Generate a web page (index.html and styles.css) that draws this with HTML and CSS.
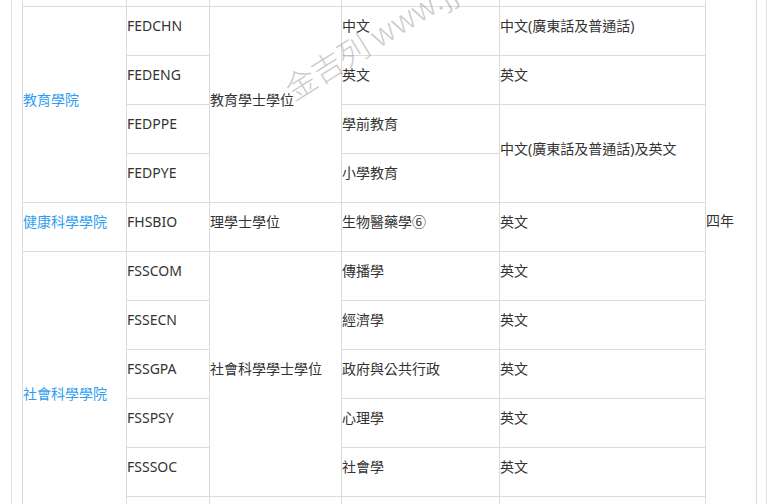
FILE: index.html
```html
<!DOCTYPE html>
<html lang="zh-Hant">
<head>
<meta charset="utf-8">
<title>課程表</title>
<link rel="stylesheet" href="styles.css">
</head>
<body>
<div class="frame">
  <table class="programmes">
    <colgroup>
      <col class="c-fac"><col class="c-code"><col class="c-deg"><col class="c-major"><col class="c-lang"><col class="c-years">
    </colgroup>
    <tbody>
      <tr class="spacer">
        <td></td><td></td><td></td><td></td><td></td>
        <td class="years" rowspan="12"><span>四年</span></td>
      </tr>
      <tr>
        <td class="fac" rowspan="4"><a href="#">教育學院</a></td>
        <td>FEDCHN</td>
        <td rowspan="4">教育學士學位</td>
        <td>中文</td>
        <td>中文(廣東話及普通話)</td>
      </tr>
      <tr>
        <td>FEDENG</td>
        <td>英文</td>
        <td>英文</td>
      </tr>
      <tr>
        <td>FEDPPE</td>
        <td>學前教育</td>
        <td rowspan="2">中文(廣東話及普通話)及英文</td>
      </tr>
      <tr>
        <td>FEDPYE</td>
        <td>小學教育</td>
      </tr>
      <tr>
        <td class="fac"><a href="#">健康科學學院</a></td>
        <td>FHSBIO</td>
        <td>理學士學位</td>
        <td>生物醫藥學⑥</td>
        <td>英文</td>
      </tr>
      <tr>
        <td class="fac" rowspan="6"><a href="#">社會科學學院</a></td>
        <td>FSSCOM</td>
        <td rowspan="5">社會科學學士學位</td>
        <td>傳播學</td>
        <td>英文</td>
      </tr>
      <tr>
        <td>FSSECN</td>
        <td>經濟學</td>
        <td>英文</td>
      </tr>
      <tr>
        <td>FSSGPA</td>
        <td>政府與公共行政</td>
        <td>英文</td>
      </tr>
      <tr>
        <td>FSSPSY</td>
        <td>心理學</td>
        <td>英文</td>
      </tr>
      <tr>
        <td>FSSSOC</td>
        <td>社會學</td>
        <td>英文</td>
      </tr>
      <tr>
        <td></td><td></td><td></td><td></td>
      </tr>
    </tbody>
  </table>
  <div class="watermark">金吉列 www.jjl.cn</div>
</div>
</body>
</html>
```
FILE: styles.css
```css
html, body {
  margin: 0;
  padding: 0;
  background: #fff;
}
body {
  font-family: "Noto Sans", "Noto Sans CJK TC", sans-serif;
  font-size: 14px;
  color: #333;
  overflow: hidden;
  height: 504px;
}
.frame {
  position: relative;
  margin-left: 11px;
  padding: 0 10px;
  box-sizing: border-box;
  width: 756px;
  border-left: 1px solid #e0e0e0;
  border-right: 1px solid #e0e0e0;
  min-height: 560px;
}
.programmes {
  border-collapse: collapse;
  table-layout: fixed;
  width: 734px;
  margin-top: -1px;
}
.c-fac { width: 104px; }
.c-code { width: 83px; }
.c-deg { width: 132px; }
.c-major { width: 158px; }
.c-lang { width: 206px; }
.c-years { width: 51px; }
.programmes td {
  border: 1px solid #dcdcdc;
  height: 38px;
  padding: 0 0 10px 0;
  line-height: 20px;
  vertical-align: middle;
  white-space: nowrap;
}
.programmes tr.spacer td {
  height: 6px;
  padding: 0;
}
.programmes tr.spacer td.years {
  vertical-align: top;
  padding: 211px 0 0 0;
  height: auto;
}
.fac a {
  color: #2e9ef2;
  text-decoration: none;
}
.watermark {
  position: absolute;
  left: 284px;
  top: 72px;
  font-family: "Noto Sans CJK SC", sans-serif;
  font-weight: 300;
  font-size: 31px;
  line-height: 34px;
  color: rgba(140, 140, 140, 0.45);
  white-space: nowrap;
  transform: rotate(-32deg);
  transform-origin: left bottom;
  pointer-events: none;
}
```
